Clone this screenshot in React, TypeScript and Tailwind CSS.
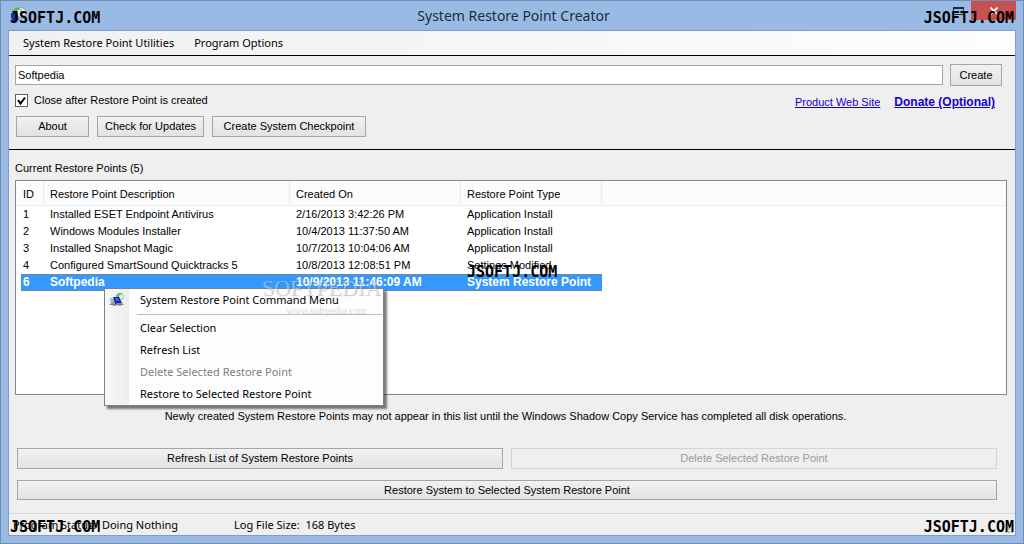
import React, { useState } from 'react';

interface RestorePoint {
  id: number;
  description: string;
  created: string;
  type: string;
}

const restorePoints: RestorePoint[] = [
  { id: 1, description: 'Installed ESET Endpoint Antivirus', created: '2/16/2013 3:42:26 PM', type: 'Application Install' },
  { id: 2, description: 'Windows Modules Installer', created: '10/4/2013 11:37:50 AM', type: 'Application Install' },
  { id: 3, description: 'Installed Snapshot Magic', created: '10/7/2013 10:04:06 AM', type: 'Application Install' },
  { id: 4, description: 'Configured SmartSound Quicktracks 5', created: '10/8/2013 12:08:51 PM', type: 'Settings Modified' },
  { id: 6, description: 'Softpedia', created: '10/9/2013 11:46:09 AM', type: 'System Restore Point' },
];

const commands = [
  { label: 'Clear Selection' },
  { label: 'Refresh List' },
  { label: 'Delete Selected Restore Point', disabled: true },
  { label: 'Restore to Selected Restore Point' },
];

const AppIcon = () => (
  <svg width="16" height="16" viewBox="0 0 16 16" aria-hidden="true">
    <circle cx="10" cy="5.5" r="5" fill="#e4ebe4" stroke="#8fa39b" />
    <path d="M10 2.5V6h3" fill="none" stroke="#64786a" />
    <path d="M1 6C2 2 5 0 9 1L8 3C6 3 5 4 5 6l2 1-4 2-2-3z" fill="#4dbb45" />
    <path d="M0 7l6-1 1 7-5 2z" fill="#1c35b5" stroke="#101d6b" />
  </svg>
);

const CommandIcon = () => (
  <svg width="16" height="16" viewBox="0 0 16 16" aria-hidden="true">
    <circle cx="11" cy="4.5" r="3.5" fill="#e9f3e9" stroke="#a9bfb0" />
    <path d="M7 4c1-3 4-3 6-3l-1 2c-2 0-2 1-2 2l2 1-4 1z" fill="#63c75c" />
    <path d="M1 6l4 1 1 5-4 1z" fill="#aab0b9" />
    <path d="M4 5l6 0 3 6-7 1z" fill="#1428a8" />
    <path d="M6 6l3 0 1 3-3 0z" fill="#3f6ce8" />
    <path d="M0 13l3-2 2 1 8-1 2 2-2 0-2 1-2-1-4 1-2-1z" fill="#7c828c" />
  </svg>
);

const Stamp = ({ className }: { className: string }) => (
  <span className={`absolute z-30 pointer-events-none text-[15px] leading-4 font-bold text-black font-['DejaVu_Sans_Mono',monospace] ${className}`}>
    JSOFTJ.COM
  </span>
);

const Button = ({ className = '', disabled, children }: { className?: string; disabled?: boolean; children: React.ReactNode }) => (
  <button
    disabled={disabled}
    className={`border whitespace-nowrap ${
      disabled ? 'border-[#d5d5d5] bg-[#efefef] text-[#9b9b9b]' : 'border-[#a6a6a6] bg-linear-to-b from-[#f1f1f1] to-[#e2e2e2]'
    } ${className}`}
  >
    {children}
  </button>
);

const ContextMenu = () => (
  <div
    role="menu"
    className="absolute left-[103px] top-[287px] z-20 w-[280px] border border-[#808080] bg-[#fdfdfd] shadow-[3px_3px_2px_rgba(0,0,0,0.5)] font-['Noto_Sans',sans-serif]"
  >
    <div className="bg-linear-to-r from-[#f8f8f8] to-[#ededed] bg-[length:24px_100%] bg-no-repeat">
      <button role="menuitem" className="flex h-[22px] w-full items-center text-left">
        <span className="flex w-[35px] pl-1">
          <CommandIcon />
        </span>
        System Restore Point Command Menu
      </button>
      <hr className="mt-[3px] mb-[2px] ml-8 mr-px border-[#bdbdbd]" />
      {commands.map(command => (
        <button
          key={command.label}
          role="menuitem"
          disabled={command.disabled}
          className="flex h-[22px] w-full items-center pl-[35px] text-left disabled:text-[#808080]"
        >
          {command.label}
        </button>
      ))}
    </div>
  </div>
);

export default function App() {
  const [name, setName] = useState('Softpedia');
  const [closeAfter, setCloseAfter] = useState(true);

  return (
    <div className="relative flex min-h-screen flex-col border border-[#6f8db5] bg-[#9abae6] px-[7px] pb-[7px] font-['Liberation_Sans',sans-serif] text-[11px] text-black">
      {/* Title bar */}
      <header className="flex h-[29px] items-start">
        <div className="flex-1 pl-[3px] pt-[6px]">
          <AppIcon />
        </div>
        <h1 className="pt-1 font-['Noto_Sans',sans-serif] text-sm leading-[22px] text-[#1d2c40]">System Restore Point Creator</h1>
        <div className="flex flex-1 justify-end">
          <button aria-label="Restore" className="h-[19px] w-[26px]">
            <svg className="mx-auto" width="11" height="8" viewBox="0 0 11 8">
              <path d="M0 0h11v8H0zM1 2v5h9V2z" fill="#1d2c40" fillRule="evenodd" />
            </svg>
          </button>
          <button aria-label="Close" className="flex h-[19px] w-[45px] items-center justify-center bg-[#c75050]">
            <svg width="8" height="8" viewBox="0 0 8 8">
              <path d="M0.5 0.5l7 7M7.5 0.5l-7 7" stroke="#fff" strokeWidth="1.6" />
            </svg>
          </button>
        </div>
      </header>

      <main className="flex flex-1 flex-col border border-[#7f9dc8] bg-[#efefef]">
        <nav className="flex h-6 items-center gap-5 bg-linear-to-r from-[#f0f0f0] to-[#fdfdfd] pl-[14px] font-['Noto_Sans',sans-serif]">
          <button>System Restore Point Utilities</button>
          <button>Program Options</button>
        </nav>

        <section className="border-y border-black px-[6px] pt-2 pb-3">
          <div className="flex items-center gap-[7px] pr-[7px]">
            <input
              aria-label="Restore point name"
              value={name}
              onChange={e => setName(e.target.value)}
              className="h-5 min-w-0 flex-1 border border-[#a5a5a5] bg-white px-[2px] outline-none"
            />
            <Button className="h-[22px] w-[52px]">Create</Button>
          </div>
          <div className="flex h-[30px] items-start justify-between pr-[14px] pt-[6px]">
            <label className="flex items-center gap-[6px]">
              <span className="relative flex">
                <input
                  type="checkbox"
                  checked={closeAfter}
                  onChange={e => setCloseAfter(e.target.checked)}
                  className="size-[13px] appearance-none border border-[#606060] bg-white"
                />
                {closeAfter && (
                  <svg className="pointer-events-none absolute inset-0" width="13" height="13" viewBox="0 0 13 13">
                    <path d="M3 6l2.5 3.5L10 3.5" fill="none" stroke="#000" strokeWidth="2" />
                  </svg>
                )}
              </span>
              Close after Restore Point is created
            </label>
            <div className="flex items-baseline gap-[14px] pt-[2px] text-[#1400c8]">
              <a href="#site" className="underline">Product Web Site</a>
              <a href="#donate" className="text-xs font-bold underline">Donate (Optional)</a>
            </div>
          </div>
          <div className="flex gap-2 pl-px">
            <Button className="h-[21px] w-[73px]">About</Button>
            <Button className="h-[21px] w-[107px]">Check for Updates</Button>
            <Button className="h-[21px] w-[154px]">Create System Checkpoint</Button>
          </div>
        </section>

        <section className="flex flex-1 flex-col px-[6px] pt-[10px]">
          <h2 className="h-5 leading-4">Current Restore Points (5)</h2>
          <div className="mr-[2px] min-h-[180px] flex-1 border border-[#828790] bg-white">
            <table className="w-full table-fixed border-separate border-spacing-0 text-left">
              <colgroup>
                <col className="w-7" />
                <col className="w-[246px]" />
                <col className="w-[171px]" />
                <col className="w-[141px]" />
                <col />
              </colgroup>
              <thead>
                <tr className="h-[25px] bg-[#fcfcfc] *:border-b *:border-[#e3edf5] *:pt-[2px] *:font-normal">
                  <th className="border-r pl-[7px]">ID</th>
                  <th className="border-r pl-[6px]">Restore Point Description</th>
                  <th className="border-r pl-[6px]">Created On</th>
                  <th className="border-r pl-[6px]">Restore Point Type</th>
                  <th aria-hidden="true" />
                </tr>
              </thead>
              <tbody>
                {restorePoints.map(point => {
                  const cell =
                    point.id === 6
                      ? 'bg-[#3399ff] text-xs leading-[17px] font-bold text-white shadow-[inset_0_1px_#7d858f,inset_0_-1px_#7d858f]'
                      : 'leading-[17px]';
                  return (
                    <tr key={point.id} className="h-[17px]">
                      <td className={`border-l-[5px] border-l-white pl-[2px] ${cell}`}>{point.id}</td>
                      <td className={`pl-[6px] ${cell}`}>{point.description}</td>
                      <td className={`pl-[6px] ${cell}`}>{point.created}</td>
                      <td className={`pl-[6px] ${cell}`}>{point.type}</td>
                      <td />
                    </tr>
                  );
                })}
              </tbody>
            </table>
          </div>
          <p className="py-[13px] pr-[13px] text-center leading-4">
            Newly created System Restore Points may not appear in this list until the Windows Shadow Copy Service has completed all disk operations.
          </p>
        </section>

        <section className="grid grid-cols-2 gap-x-2 gap-y-[11px] pt-[11px] pr-[18px] pb-[13px] pl-2">
          <Button className="h-[21px]">Refresh List of System Restore Points</Button>
          <Button className="h-[21px]" disabled>Delete Selected Restore Point</Button>
          <Button className="col-span-2 h-5">Restore System to Selected System Restore Point</Button>
        </section>

        <footer className="flex h-[22px] items-center justify-between border-t border-[#d7d7d7] pl-1 font-['Noto_Sans',sans-serif]">
          <div className="flex gap-14 pt-[2px] whitespace-pre">
            <span>Program Status:  Doing Nothing</span>
            <span>Log File Size:  168 Bytes</span>
          </div>
          <svg className="self-end" width="12" height="12" viewBox="0 0 12 12" aria-hidden="true">
            <path d="M8 2h2v2H8zM8 5h2v2H8zM5 5h2v2H5zM8 8h2v2H8zM5 8h2v2H5zM2 8h2v2H2z" fill="#b5b5b5" />
          </svg>
        </footer>
      </main>

      <ContextMenu />

      {/* Watermarks */}
      <div className="pointer-events-none absolute left-[261px] top-[273px] z-20 flex flex-col items-center font-['Liberation_Serif',serif] text-white/40 [text-shadow:1px_1px_1px_rgba(90,90,90,0.35)]">
        <span className="text-[22px] leading-7">SOFTPEDIA</span>
        <span className="pl-2 text-[10px] leading-4 text-white/80">www.softpedia.com</span>
      </div>
      <Stamp className="left-[9px] top-[9px]" />
      <Stamp className="right-[9px] top-[9px]" />
      <Stamp className="left-[466px] top-[263px]" />
      <Stamp className="left-[9px] bottom-[8px]" />
      <Stamp className="right-[9px] bottom-[8px]" />
    </div>
  );
}
